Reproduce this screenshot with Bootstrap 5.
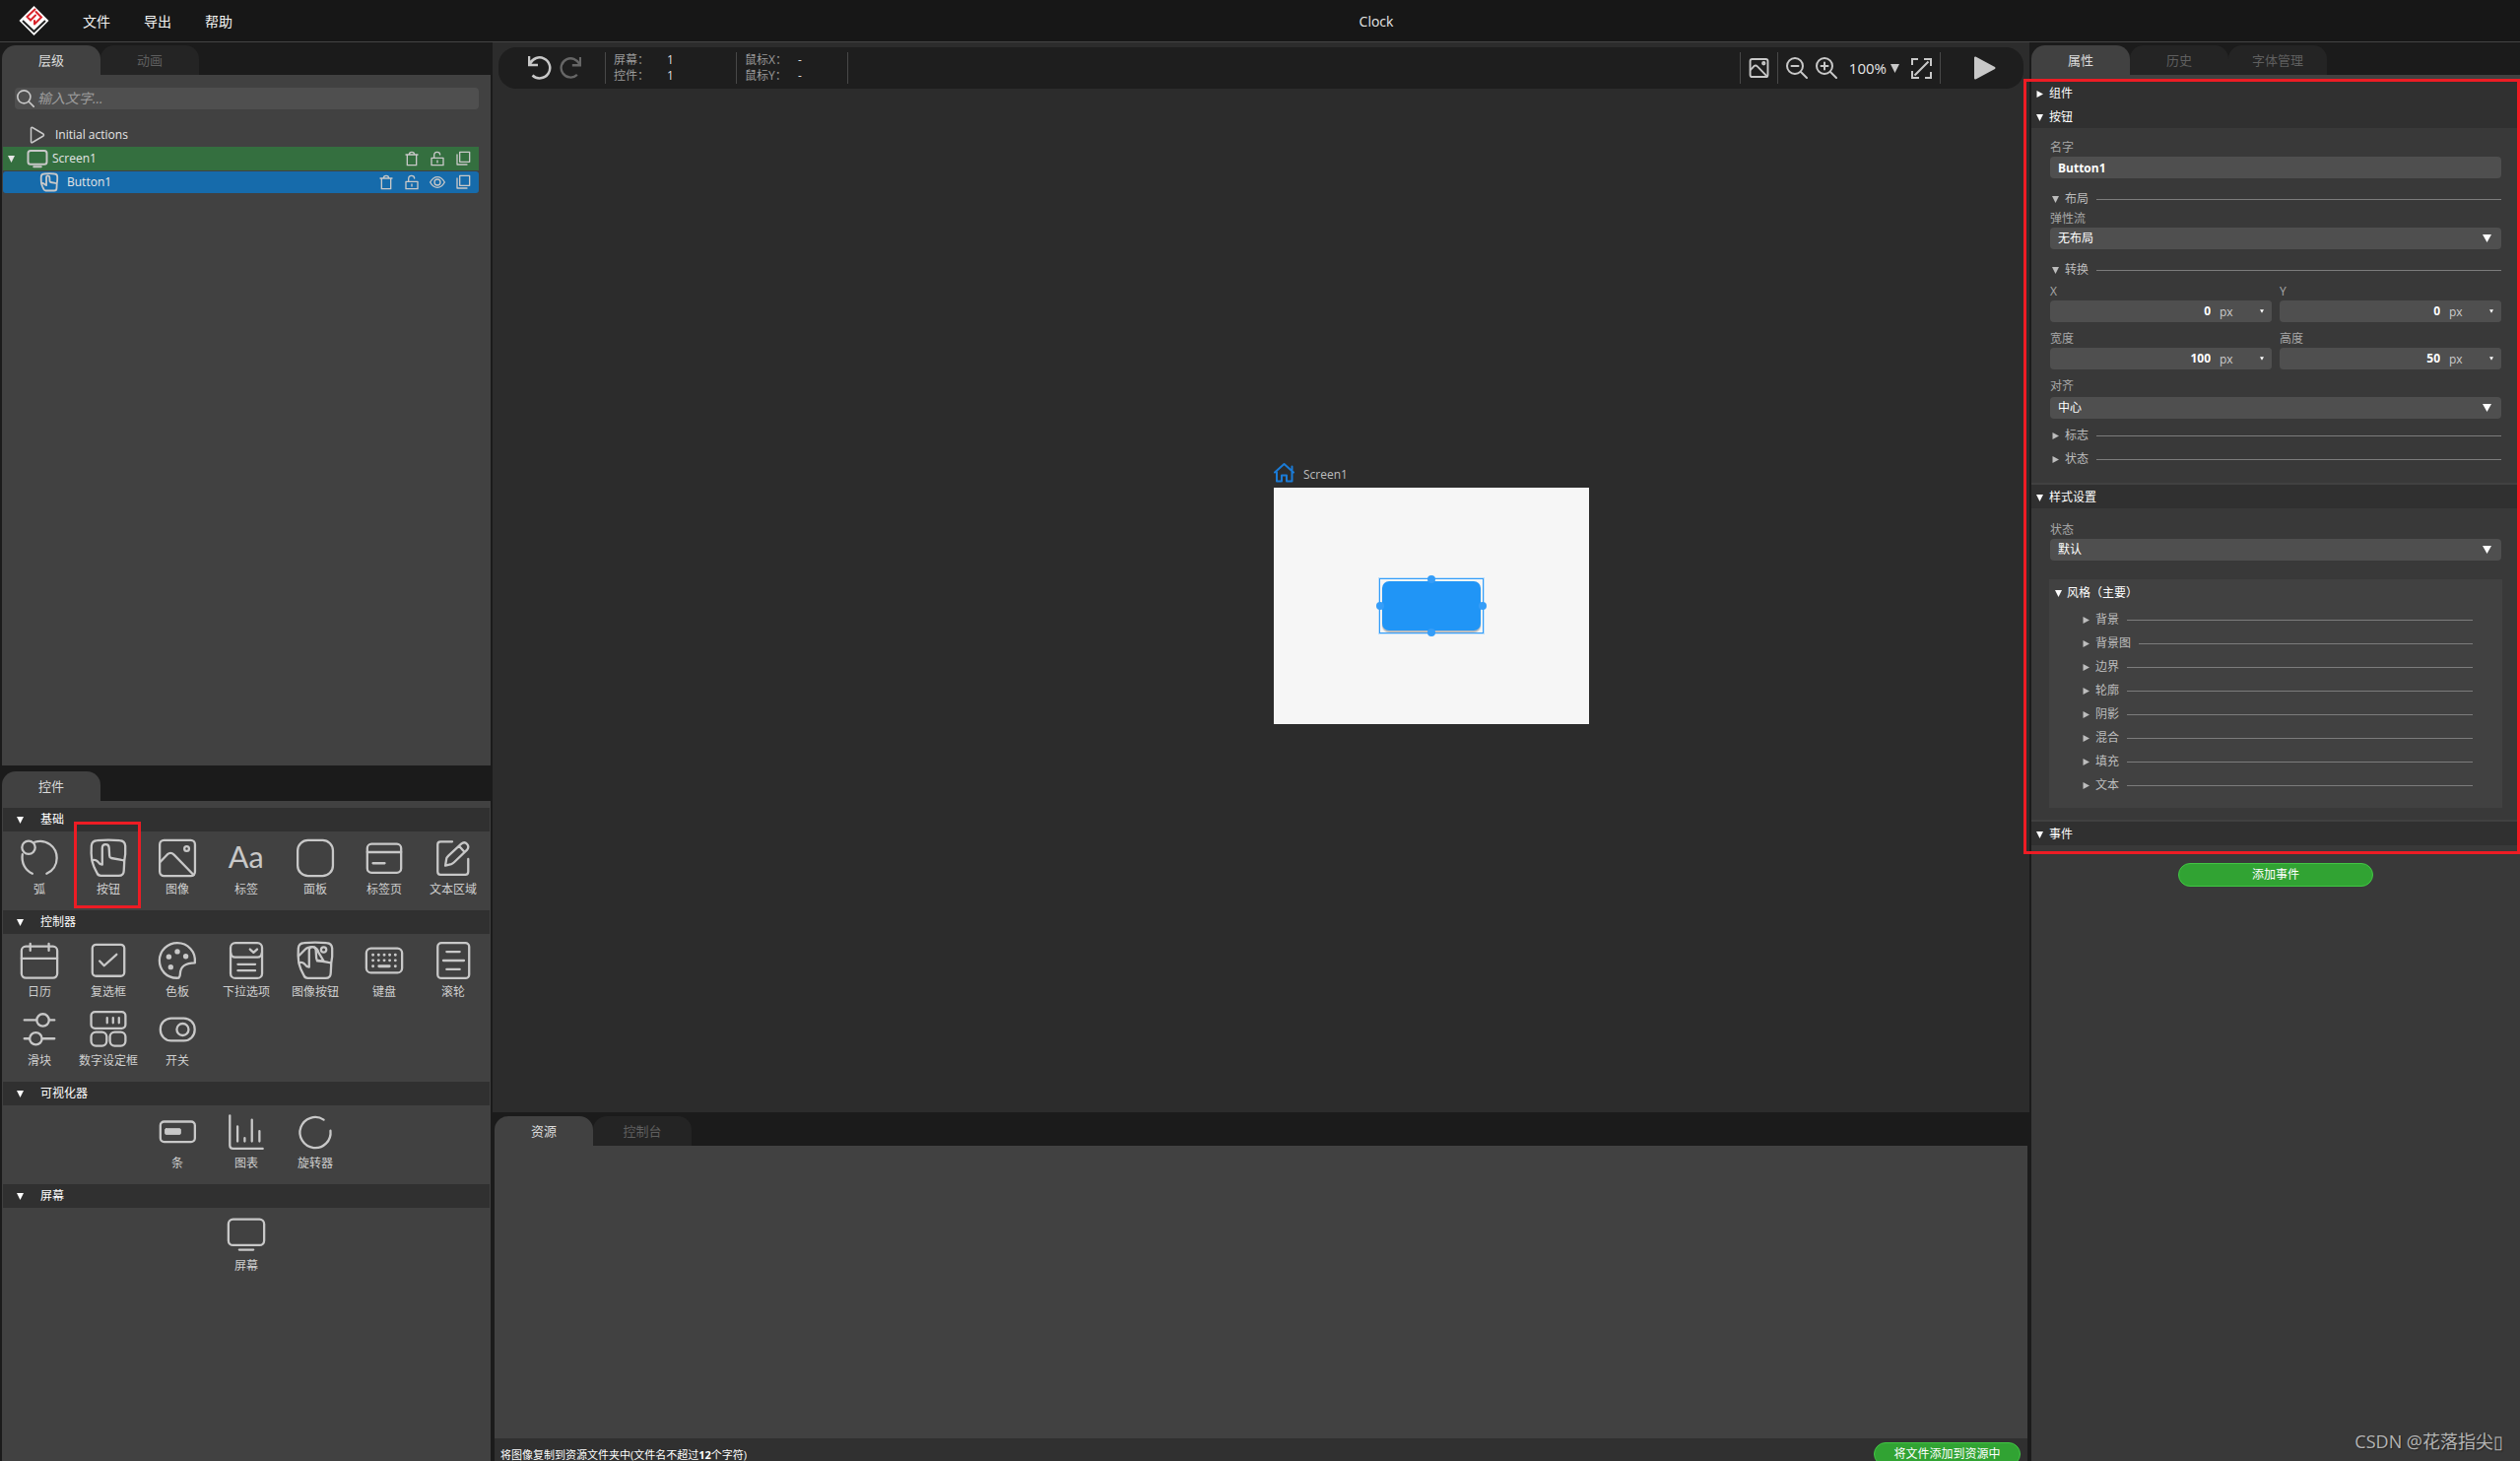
<!DOCTYPE html>
<html lang="zh-CN">
<head>
<meta charset="utf-8">
<meta name="viewport" content="width=device-width, initial-scale=1">
<title>Clock</title>
<link rel="stylesheet" href="https://cdn.jsdelivr.net/npm/bootstrap@5.3.0/dist/css/bootstrap.min.css">
<style>
:root{--dark:#1b1b1b;--panel:#414141;--field:#4f4f4f;--head:#303030;--prop:#393939;--ink:#c8c8c8}
body{font-family:"Open Sans","Noto Sans CJK SC",sans-serif;font-size:12px;line-height:20px;color:#e6e6e6;background:var(--dark);overflow:hidden}
button,input,select{font:inherit;color:inherit}
button{background:none;border:0;padding:0;text-align:start}
svg{display:block;flex:none;fill:none;stroke:var(--ink);stroke-width:2;stroke-linecap:round;stroke-linejoin:round}
.min-0{min-width:0;min-height:0}
/* top bar */
.topbar{height:43px;background:#171717;border-bottom:1px solid #444;padding-left:18px;font-size:14px}
.menu{gap:34px;margin-left:33px}
.menu a{color:#f4f4f4;text-decoration:none}
.menu,.app-title{padding-top:2px}
/* columns */
.side-l{width:500px;padding:0 2px}
.side-r{width:498px;padding-left:2px}
.tabs{height:33px;padding-top:3px;flex:none}
.tabs button{width:100px;height:30px;border-radius:14px 14px 0 0;background:#242424;color:#5f5f5f;font-size:13px;text-align:center}
.tabs button.on{background:var(--panel);color:#dcdcdc}
.pane{background:var(--panel)}
/* hierarchy */
.search{margin:13px 12px 14px 13px;height:22px;background:var(--field);border-radius:4px;padding-left:2px}
.search input{background:none;border:0;outline:0;font-size:14px;padding:0 0 0 3px}
.search input::placeholder{color:#9c9c9c;font-style:italic}
.trow{height:24px;margin:0 12px 0 1px}
.trow svg{stroke-width:4}
.trow .acts{gap:8px;padding-right:7px}
.trow .acts svg{stroke-width:2}
.row-screen{background:#346f3f;padding-left:5px}
.row-btn{background:#166bab;height:22px;margin-top:1px;border-radius:3px;padding-left:37px}
.row-init{padding-left:25px}
/* widgets */
.dock{height:706px}
.dock .tabs{height:36px;padding-top:6px}
.dock-body{padding-top:7px}
.sec{height:24px;background:var(--head);margin:0 1px;padding-left:14px;color:#fff;gap:17px;width:calc(100% - 2px)}
.tools{padding:0 3px 10px}
.tool{width:70px;height:70px;padding-top:6px;color:#cfcfcf}
.tool svg{width:44px;height:42px;stroke-width:2.4}
.tool span{line-height:22px}
.aa{font-family:Lato,sans-serif;font-size:32px;fill:var(--ink);stroke:none}
/* toolbar */
.bar{margin:5px 6px 0;height:42px;background:#1e1e1e;border-radius:18px;padding:0 28px 0 30px}
.bar svg{stroke-width:2}
.vr-x{width:1px;height:32px;background:#484848;flex:none}
.info{line-height:16px;color:#9a9a9a}
.info b{color:#dedede;font-weight:400}
.info div{width:62px}
.work{background:#2c2c2c}
/* canvas */
.screen{left:793px;top:379px;width:320px}
.screen-name{height:26px;gap:9px;color:#bdbdbd;padding-bottom:4px}
.stage{height:240px;background:#f6f6f6}
.sel{width:106px;height:56px;border:1px solid #359df8;padding:2px;box-shadow:0 0 0 1px #bfe0fb}
.lvbtn{width:100px;height:50px;background:#2095f6;border-radius:7px;box-shadow:0 2px 1px #bbb}
.knob{width:8px;height:8px;border-radius:50%;background:#359df8;transform:translate(-50%,-50%)}
/* assets */
.assets{height:354px;padding:0 2px}
.foot{height:23px;background:var(--head);padding:4px 7px 0 6px;font-size:11px;line-height:26px;overflow:hidden}
.go{height:24px;border:1px solid #42c644;border-radius:12px;background:#31a333;color:#fff;font-size:12px;line-height:22px;text-align:center;white-space:nowrap}
.go-file{width:149px}
.go-event{width:198px;margin-top:18px}
/* properties */
.prop{background:var(--prop)}
.prop .sec{margin:0;width:100%;padding:2px 0 0 5px;gap:6px}
.sep{border-top:2px solid var(--panel)}
.pbody{padding:0 19px 0 19px}
.pbody label{display:block;height:20px;line-height:22px;color:#a8a8a8}
.fld{display:block;width:100%;height:22px;background-color:var(--field);border:0;border-radius:4px;padding:0 8px;color:#fff}
select.fld{appearance:none;background-repeat:no-repeat;background-position:right 10px center;background-size:9px 8px;background-image:url("data:image/svg+xml,%3Csvg xmlns='http://www.w3.org/2000/svg' viewBox='0 0 9 8'%3E%3Cpath d='M0 0h9L4.500 8z' fill='%23fff'/%3E%3C/svg%3E")}
.num{height:22px;background:var(--field);border-radius:4px}
.num input{background:none;border:0;text-align:right;font-weight:700;color:#fff;padding:0 5px 0 0}
.num select.fld{width:57px;flex:none;padding:2px 0 0 4px;color:#ccc;background-size:4px 4px;background-position:right 8px center}
.fold{height:20px;gap:6px;padding:2px 0 0 2px;color:#bdbdbd;width:100%}
.fold i{flex:1;height:1px;background:#7c7c7c;margin-left:2px}
.fold.tall{height:24px}
.fold.spaced{margin-top:10px}
.tri{width:7px;height:7px;fill:currentColor;stroke:none}
.style-box{background:var(--panel);margin:19px -1px 0;height:232px;padding:0 30px 0 6px}
.style-box .fold{padding-left:28px}
.style-name{gap:5px;height:28px}
/* callouts over the panels */
.callout{border:3px solid #ed1c24;pointer-events:none}
.c-tool{left:75px;top:834px;width:68px;height:88px}
.c-prop{right:0;top:80px;width:504px;height:787px}
.wm{right:17px;bottom:9px;font-size:18px;line-height:22px;color:#b4b4b4;text-shadow:1px 1px 1px #222}
</style>
<script src="https://cdn.jsdelivr.net/npm/bootstrap@5.3.0/dist/js/bootstrap.bundle.min.js"></script>
</head>
<body class="vh-100 d-flex flex-column position-relative">
<svg class="d-none" aria-hidden="true">
<symbol id="down" viewBox="0 0 7 7"><path d="M0 0h7L3.500 7z"/></symbol>
<symbol id="right" viewBox="0 0 7 7"><path d="M.5 0v7L7 3.500z"/></symbol>
<symbol id="arc" viewBox="0 0 44 44"><circle cx="10.500" cy="10.700" r="7"/><path d="M4 18C2.500 27 7 35 14.500 38.500M17 5C29 1 40.500 10 40.500 22 40.500 29 36.500 35.500 29.700 38.500"/></symbol>
<symbol id="hand" viewBox="0 0 44 44"><path d="M4.500 24.500C3.500 18 3.700 13 4 9Q4.500 3.700 10 3.300Q22 2 34 3.300Q39.500 3.700 40 9Q40.500 18 39 25M4.500 24.500Q5.500 28 7 32L10 38Q11 40.700 14 40.700H33Q38.500 40.700 38.500 35L39 25.500Q38.500 24.300 36 24L25 22Q23.300 21.500 23.200 19.500L22.700 11Q22.500 7.500 19 7.500Q15.500 7.500 15.500 11.500V29Q12.500 28.500 10.500 25.500Q8 23 4.500 24.500"/></symbol>
<symbol id="pic" viewBox="0 0 44 44"><rect x="3.300" y="3" width="37.500" height="38" rx="4.500"/><circle cx="32" cy="12" r="2.500"/><path d="M4 26L11.500 18Q15 15 18.500 18.500L39.500 40"/></symbol>
<symbol id="label" viewBox="0 0 44 44"><text class="aa" x="3" y="32">Aa</text></symbol>
<symbol id="panel" viewBox="0 0 44 44"><rect x="3.300" y="3" width="37.500" height="38" rx="11"/></symbol>
<symbol id="tabv" viewBox="0 0 44 44"><rect x="4" y="7" width="36" height="30.500" rx="4.500"/><path d="M4 15.700H40M10 27.500H22.500"/></symbol>
<symbol id="area" viewBox="0 0 44 44"><path d="M21 4.500H8.500Q5.500 4.500 5.500 7.500V36.500Q5.500 39.700 8.500 39.700H35Q38 39.700 38 36.500V23"/><path d="M13.700 30L15 22Q15.500 21 17 19.500L30.500 7Q34 4 36.700 7Q39.500 10 36.500 13.500L23 26.500Q21.500 28 20 28.500ZM28.500 9.500L33.500 15"/></symbol>
<symbol id="cal" viewBox="0 0 44 44"><rect x="3" y="7" width="38" height="33.500" rx="4.500"/><path d="M3 19.700H41M12.300 4V11.500M32 4V11.500"/></symbol>
<symbol id="check" viewBox="0 0 44 44"><rect x="5" y="5" width="34" height="33.500" rx="4"/><path d="M12.700 22.500L17.500 27.500 30.700 15.500"/></symbol>
<symbol id="palette" viewBox="0 0 44 44"><path d="M23.500 40.500C10 41.500 3 31.500 3 22 3 11 12 3.300 22 3.300 33 3.300 42 12.500 40.700 24.500 31 24.500 25 28 25 36.500Q25 39 23.500 40.500Z"/><g fill="#c8c8c8" stroke="none"><circle cx="13" cy="18" r="2.800"/><circle cx="22" cy="12.500" r="2.800"/><circle cx="31" cy="17.500" r="2.800"/><circle cx="15" cy="29" r="2.800"/></g></symbol>
<symbol id="drop" viewBox="0 0 44 44"><rect x="5.300" y="3.300" width="33.500" height="37.500" rx="5"/><path d="M5.500 14Q6 18.300 10 18.500H34Q38 18.300 38.500 14M26 10L29.700 13.500 33.500 10M13 26H31.500M13 32.700H31.500"/></symbol>
<symbol id="imgbtn" viewBox="0 0 44 44"><use href="#hand"/><circle cx="31" cy="10.500" r="2.800"/><path d="M4.500 17L11.500 10Q14 7.500 19 7.500M21 8Q24.500 9.500 25.500 13.500L31 22.500H24"/></symbol>
<symbol id="keys" viewBox="0 0 44 44"><rect x="3" y="9" width="38" height="26" rx="5"/><path stroke-width="3" d="M10 16h.1M16 16h.1M22 16h.1M27.800 16h.1M33.800 16h.1M10 21.800h.1M16 21.800h.1M22 21.800h.1M27.800 21.800h.1M33.800 21.800h.1M10 28h.1M16.500 28H27.500M33.800 28h.1"/></symbol>
<symbol id="roller" viewBox="0 0 44 44"><rect x="5.500" y="3.300" width="33.500" height="37.500" rx="4"/><path d="M15 12.700H29M15 31.300H29M11.500 22H33.500"/></symbol>
<symbol id="slider" viewBox="0 0 44 44"><path d="M6 12H19M32.500 12H38M6 31.700H11.500M25 31.700H38"/><circle cx="25.700" cy="12" r="6.500"/><circle cx="18.200" cy="31.700" r="6.500"/></symbol>
<symbol id="spinbox" viewBox="0 0 44 44"><rect x="3.700" y="3.300" width="36.500" height="17.500" rx="4"/><rect x="3.700" y="24.700" width="16.500" height="14.700" rx="5"/><rect x="23.700" y="24.700" width="16.500" height="14.700" rx="5"/><path d="M20.700 9.500V15M27 9.500V15M33.300 9.500V15"/></symbol>
<symbol id="switch" viewBox="0 0 44 44"><rect x="4" y="10" width="36.500" height="24" rx="11.500"/><circle cx="27.700" cy="22" r="6.300"/></symbol>
<symbol id="meter" viewBox="0 0 44 44"><rect x="4" y="11" width="36.700" height="21.500" rx="4"/><rect x="9" y="18.500" width="16.500" height="6" rx="1" fill="#c8c8c8" stroke-width="1"/></symbol>
<symbol id="chart" viewBox="0 0 44 44"><path d="M4.500 4.500V36.500Q4.500 39.700 8 39.700H39.500M12.700 16V32M20.300 28.500V32M28 9V32M36 21V32"/></symbol>
<symbol id="spin" viewBox="0 0 44 44"><path d="M31 9A16.300 16.300 0 1 0 38.200 20.700"/></symbol>
<symbol id="mon" viewBox="0 0 44 44"><rect x="3" y="6" width="38" height="27.500" rx="5"/><path d="M14.500 38.300H29.500"/></symbol>
<symbol id="trash" viewBox="0 0 24 24"><path d="M3 6H21M5 6V22H19V6M8 6Q8 2 12 2T16 6"/></symbol>
<symbol id="lock" viewBox="0 0 24 24"><path d="M3 11H21V22H3ZM7 11V7Q7 2 11.500 2T16 6M12 15V18"/></symbol>
<symbol id="copy" viewBox="0 0 24 24"><path d="M7 2H22V17H7ZM3 6V21H18"/></symbol>
<symbol id="eye" viewBox="0 0 24 24"><path d="M1 12Q5.500 4 12 4T23 12Q18.500 20 12 20T1 12Z"/><circle cx="12" cy="12" r="4.500"/></symbol>
<symbol id="undo" viewBox="0 0 24 24"><path d="M1 0V9H10M1.500 8C5 2 11 0 16 2.300A10.500 10.500 0 1 1 4.500 19.500" stroke-linecap="butt" stroke-linejoin="miter"/></symbol>
<symbol id="lens" viewBox="0 0 22 22"><circle cx="9" cy="9" r="8"/><path d="M15 15L21 21"/></symbol>
</svg>

<header class="topbar d-flex align-items-center flex-shrink-0">
  <svg width="33" height="32" viewBox="0 0 33 32" role="img" aria-label="Logo"><path d="M16.500 1L31.500 16 16.500 31 1.500 16Z" fill="#fff" stroke="none"/><path d="M5 16L16.500 27 28 16" stroke="#222" stroke-linecap="butt" stroke-linejoin="miter"/><path d="M17.500 4.500L9.500 12 13 15.500 18 10.500M18.500 7L24 12.500 17 19.500M17 16V19.500" stroke="#d8232a" stroke-linejoin="miter"/></svg>
  <nav class="menu d-flex"><a href="#">文件</a><a href="#">导出</a><a href="#">帮助</a></nav>
  <div class="app-title flex-grow-1 text-center">Clock</div>
</header>

<div class="d-flex flex-grow-1 min-0">
  <aside class="side-l d-flex flex-column flex-shrink-0">
    <section class="d-flex flex-column flex-grow-1 min-0">
      <div class="tabs d-flex"><button class="on">层级</button><button>动画</button></div>
      <div class="pane flex-grow-1">
        <div class="search d-flex align-items-center">
          <svg width="18" height="18" viewBox="0 0 22 22"><use href="#lens"/></svg>
          <input class="flex-grow-1" type="text" placeholder="输入文字..." aria-label="输入文字">
        </div>
        <div class="trow row-init d-flex align-items-center"><svg width="20" height="20" viewBox="0 0 20 20" style="stroke-width:1.5"><path d="M3.500 3V17Q3.700 18.500 5 17.500L16 11Q17 10 16 9L5 2.500Q3.700 2 3.500 3Z"/></svg><span class="ps-1 ms-1">Initial actions</span></div>
        <div class="trow row-screen d-flex align-items-center"><svg class="tri"><use href="#down"/></svg><svg class="ms-2 ps-1" width="26" height="22"><use href="#mon"/></svg><span class="flex-grow-1 ms-1">Screen1</span>
          <div class="acts d-flex gap-2"><button aria-label="删除"><svg width="18" height="16"><use href="#trash"/></svg></button><button aria-label="锁定"><svg width="18" height="16"><use href="#lock"/></svg></button><button aria-label="复制"><svg width="18" height="16"><use href="#copy"/></svg></button></div></div>
        <div class="trow row-btn d-flex align-items-center"><svg width="20" height="20"><use href="#hand"/></svg><span class="flex-grow-1 ps-1 ms-1 me-2">Button1</span>
          <div class="acts d-flex gap-2"><button aria-label="删除"><svg width="18" height="16"><use href="#trash"/></svg></button><button aria-label="锁定"><svg width="18" height="16"><use href="#lock"/></svg></button><button aria-label="显示"><svg width="18" height="16"><use href="#eye"/></svg></button><button aria-label="复制"><svg width="18" height="16"><use href="#copy"/></svg></button></div></div>
      </div>
    </section>
    <section class="dock d-flex flex-column flex-shrink-0">
      <div class="tabs d-flex"><button class="on">控件</button></div>
      <div class="pane dock-body flex-grow-1">
        <button class="sec d-flex align-items-center"><svg class="tri"><use href="#down"/></svg>基础</button>
        <div class="tools d-flex flex-wrap">
          <button class="tool d-flex flex-column align-items-center"><svg><use href="#arc"/></svg><span>弧</span></button>
          <button class="tool d-flex flex-column align-items-center"><svg><use href="#hand"/></svg><span>按钮</span></button>
          <button class="tool d-flex flex-column align-items-center"><svg><use href="#pic"/></svg><span>图像</span></button>
          <button class="tool d-flex flex-column align-items-center"><svg><use href="#label"/></svg><span>标签</span></button>
          <button class="tool d-flex flex-column align-items-center"><svg><use href="#panel"/></svg><span>面板</span></button>
          <button class="tool d-flex flex-column align-items-center"><svg><use href="#tabv"/></svg><span>标签页</span></button>
          <button class="tool d-flex flex-column align-items-center"><svg><use href="#area"/></svg><span>文本区域</span></button>
        </div>
        <button class="sec d-flex align-items-center"><svg class="tri"><use href="#down"/></svg>控制器</button>
        <div class="tools d-flex flex-wrap">
          <button class="tool d-flex flex-column align-items-center"><svg><use href="#cal"/></svg><span>日历</span></button>
          <button class="tool d-flex flex-column align-items-center"><svg><use href="#check"/></svg><span>复选框</span></button>
          <button class="tool d-flex flex-column align-items-center"><svg><use href="#palette"/></svg><span>色板</span></button>
          <button class="tool d-flex flex-column align-items-center"><svg><use href="#drop"/></svg><span>下拉选项</span></button>
          <button class="tool d-flex flex-column align-items-center"><svg><use href="#imgbtn"/></svg><span>图像按钮</span></button>
          <button class="tool d-flex flex-column align-items-center"><svg><use href="#keys"/></svg><span>键盘</span></button>
          <button class="tool d-flex flex-column align-items-center"><svg><use href="#roller"/></svg><span>滚轮</span></button>
          <button class="tool d-flex flex-column align-items-center"><svg><use href="#slider"/></svg><span>滑块</span></button>
          <button class="tool d-flex flex-column align-items-center"><svg><use href="#spinbox"/></svg><span>数字设定框</span></button>
          <button class="tool d-flex flex-column align-items-center"><svg><use href="#switch"/></svg><span>开关</span></button>
        </div>
        <button class="sec d-flex align-items-center"><svg class="tri"><use href="#down"/></svg>可视化器</button>
        <div class="tools d-flex flex-wrap justify-content-center">
          <button class="tool d-flex flex-column align-items-center"><svg><use href="#meter"/></svg><span>条</span></button>
          <button class="tool d-flex flex-column align-items-center"><svg><use href="#chart"/></svg><span>图表</span></button>
          <button class="tool d-flex flex-column align-items-center"><svg><use href="#spin"/></svg><span>旋转器</span></button>
        </div>
        <button class="sec d-flex align-items-center"><svg class="tri"><use href="#down"/></svg>屏幕</button>
        <div class="tools d-flex flex-wrap justify-content-center">
          <button class="tool d-flex flex-column align-items-center"><svg><use href="#mon"/></svg><span>屏幕</span></button>
        </div>
      </div>
    </section>
  </aside>

  <main class="d-flex flex-column flex-grow-1 min-0">
    <div class="work d-flex flex-column flex-grow-1 min-0">
      <div class="bar d-flex align-items-center flex-shrink-0">
        <button aria-label="撤销"><svg width="24" height="24" viewBox="0 0 24 24" style="stroke-width:2.5"><use href="#undo"/></svg></button>
        <button aria-label="重做" class="ps-2"><svg width="22" height="24" viewBox="0 0 24 24" style="stroke:#666;stroke-width:2.5"><use href="#undo" transform="matrix(-1 0 0 1 24 0)"/></svg></button>
        <div class="vr-x ms-4"></div>
        <div class="info d-flex" style="width:132px"><div class="ps-2">屏幕：<br>控件：</div><b>1<br>1</b></div>
        <div class="vr-x"></div>
        <div class="info d-flex" style="width:112px"><div class="ps-2">鼠标X：<br>鼠标Y：</div><b>-<br>-</b></div>
        <div class="vr-x"></div>
        <div class="flex-grow-1"></div>
        <div class="vr-x"></div>
        <button class="px-2" aria-label="背景图"><svg width="21" height="22" style="stroke-width:4"><use href="#pic"/></svg></button>
        <div class="vr-x"></div>
        <button class="ps-2" aria-label="缩小"><svg width="22" height="22" viewBox="0 0 22 22"><use href="#lens"/><path d="M5.500 9H12.500"/></svg></button>
        <button class="ps-2" aria-label="放大"><svg width="22" height="22" viewBox="0 0 22 22"><use href="#lens"/><path d="M5.500 9H12.500M9 5.500V12.500"/></svg></button>
        <button class="d-flex align-items-center ms-2 ps-1" style="font-size:15px">100%<svg class="ms-1" width="9" height="9" viewBox="0 0 7 7" style="fill:#c8c8c8;stroke:none"><use href="#down"/></svg></button>
        <button class="ps-2 pe-2 ms-1" aria-label="适应窗口"><svg width="21" height="21" viewBox="0 0 21 21" style="stroke-linecap:butt;stroke-linejoin:miter"><path d="M1 7V1H7M13 1H20V8M20 14V20H14M8 20H1V13M3.500 17.500L17.500 3.500"/></svg></button>
        <div class="vr-x me-4"></div>
        <button class="ps-2" aria-label="运行"><svg width="24" height="24" viewBox="0 0 24 24"><path d="M3 1.500V22.500L22.500 12Z" fill="#c8c8c8"/></svg></button>
      </div>
      <div class="flex-grow-1 position-relative overflow-hidden min-0">
        <div class="screen position-absolute">
          <div class="screen-name d-flex align-items-center"><svg width="21" height="20" viewBox="0 0 21 20" style="stroke:#1b7bd6"><path d="M1 9.500L10.500 1 20 9.500M3 9V18.500H8V12.500H13V18.500H18.500V3.500"/></svg><span class="pt-1">Screen1</span></div>
          <div class="stage d-flex align-items-center justify-content-center">
            <div class="sel position-relative">
              <div class="lvbtn"></div>
              <i class="knob position-absolute top-0 start-50"></i><i class="knob position-absolute top-100 start-50"></i>
              <i class="knob position-absolute top-50 start-0"></i><i class="knob position-absolute top-50 start-100"></i>
            </div>
          </div>
        </div>
      </div>
    </div>
    <section class="assets d-flex flex-column flex-shrink-0">
      <div class="tabs d-flex mt-1 pt-0" style="height:30px"><button class="on">资源</button><button>控制台</button></div>
      <div class="pane flex-grow-1"></div>
      <div class="foot d-flex justify-content-between"><span class="text-white">将图像复制到资源文件夹中(文件名不超过<b>12</b>个字符)</span><button class="go go-file">将文件添加到资源中</button></div>
    </section>
  </main>

  <aside class="side-r d-flex flex-column flex-shrink-0">
    <div class="tabs d-flex"><button class="on">属性</button><button>历史</button><button>字体管理</button></div>
    <div class="prop flex-grow-1">
      <div class="pane" style="height:6px"></div>
      <button class="sec d-flex align-items-center"><svg class="tri"><use href="#right"/></svg>组件</button>
      <button class="sec d-flex align-items-center"><svg class="tri"><use href="#down"/></svg>按钮</button>
      <div class="pbody" style="padding-top:9px;padding-bottom:13px">
        <label for="nm">名字</label>
        <input id="nm" class="fld fw-bold" type="text" value="Button1">
        <button class="fold spaced d-flex align-items-center"><svg class="tri"><use href="#down"/></svg>布局<i></i></button>
        <label for="flow">弹性流</label>
        <select id="flow" class="fld"><option>无布局</option></select>
        <button class="fold spaced d-flex align-items-center"><svg class="tri"><use href="#down"/></svg>转换<i></i></button>
        <div class="row gx-2" style="margin-top:2px">
          <div class="col-6"><label for="px">X</label><div class="num d-flex"><input id="px" class="w-100" type="text" value="0"><select class="fld" aria-label="X 单位"><option>px</option></select></div></div>
          <div class="col-6"><label for="py">Y</label><div class="num d-flex"><input id="py" class="w-100" type="text" value="0"><select class="fld" aria-label="Y 单位"><option>px</option></select></div></div>
        </div>
        <div class="row gx-2" style="margin-top:6px">
          <div class="col-6"><label for="pw">宽度</label><div class="num d-flex"><input id="pw" class="w-100" type="text" value="100"><select class="fld" aria-label="宽度单位"><option>px</option></select></div></div>
          <div class="col-6"><label for="ph">高度</label><div class="num d-flex"><input id="ph" class="w-100" type="text" value="50"><select class="fld" aria-label="高度单位"><option>px</option></select></div></div>
        </div>
        <label for="al" style="margin:6px 0 2px">对齐</label>
        <select id="al" class="fld"><option>中心</option></select>
        <button class="fold tall d-flex align-items-center mt-1"><svg class="tri"><use href="#right"/></svg>标志<i></i></button>
        <button class="fold tall d-flex align-items-center"><svg class="tri"><use href="#right"/></svg>状态<i></i></button>
      </div>
      <div class="sep"></div>
      <button class="sec d-flex align-items-center"><svg class="tri"><use href="#down"/></svg>样式设置</button>
      <div class="pbody" style="padding-top:11px;padding-bottom:12px">
        <label for="st">状态</label>
        <select id="st" class="fld"><option>默认</option></select>
        <div class="style-box">
          <button class="style-name d-flex align-items-center text-white"><svg class="tri"><use href="#down"/></svg>风格（主要）</button>
          <button class="fold tall d-flex align-items-center"><svg class="tri"><use href="#right"/></svg>背景<i></i></button>
          <button class="fold tall d-flex align-items-center"><svg class="tri"><use href="#right"/></svg>背景图<i></i></button>
          <button class="fold tall d-flex align-items-center"><svg class="tri"><use href="#right"/></svg>边界<i></i></button>
          <button class="fold tall d-flex align-items-center"><svg class="tri"><use href="#right"/></svg>轮廓<i></i></button>
          <button class="fold tall d-flex align-items-center"><svg class="tri"><use href="#right"/></svg>阴影<i></i></button>
          <button class="fold tall d-flex align-items-center"><svg class="tri"><use href="#right"/></svg>混合<i></i></button>
          <button class="fold tall d-flex align-items-center"><svg class="tri"><use href="#right"/></svg>填充<i></i></button>
          <button class="fold tall d-flex align-items-center"><svg class="tri"><use href="#right"/></svg>文本<i></i></button>
        </div>
      </div>
      <div class="sep"></div>
      <button class="sec d-flex align-items-center"><svg class="tri"><use href="#down"/></svg>事件</button>
      <button class="go go-event d-block mx-auto">添加事件</button>
    </div>
  </aside>
</div>

<div class="callout c-tool position-absolute"></div>
<div class="callout c-prop position-absolute"></div>
<div class="wm position-absolute">CSDN @花落指尖▯</div>
</body>
</html>
